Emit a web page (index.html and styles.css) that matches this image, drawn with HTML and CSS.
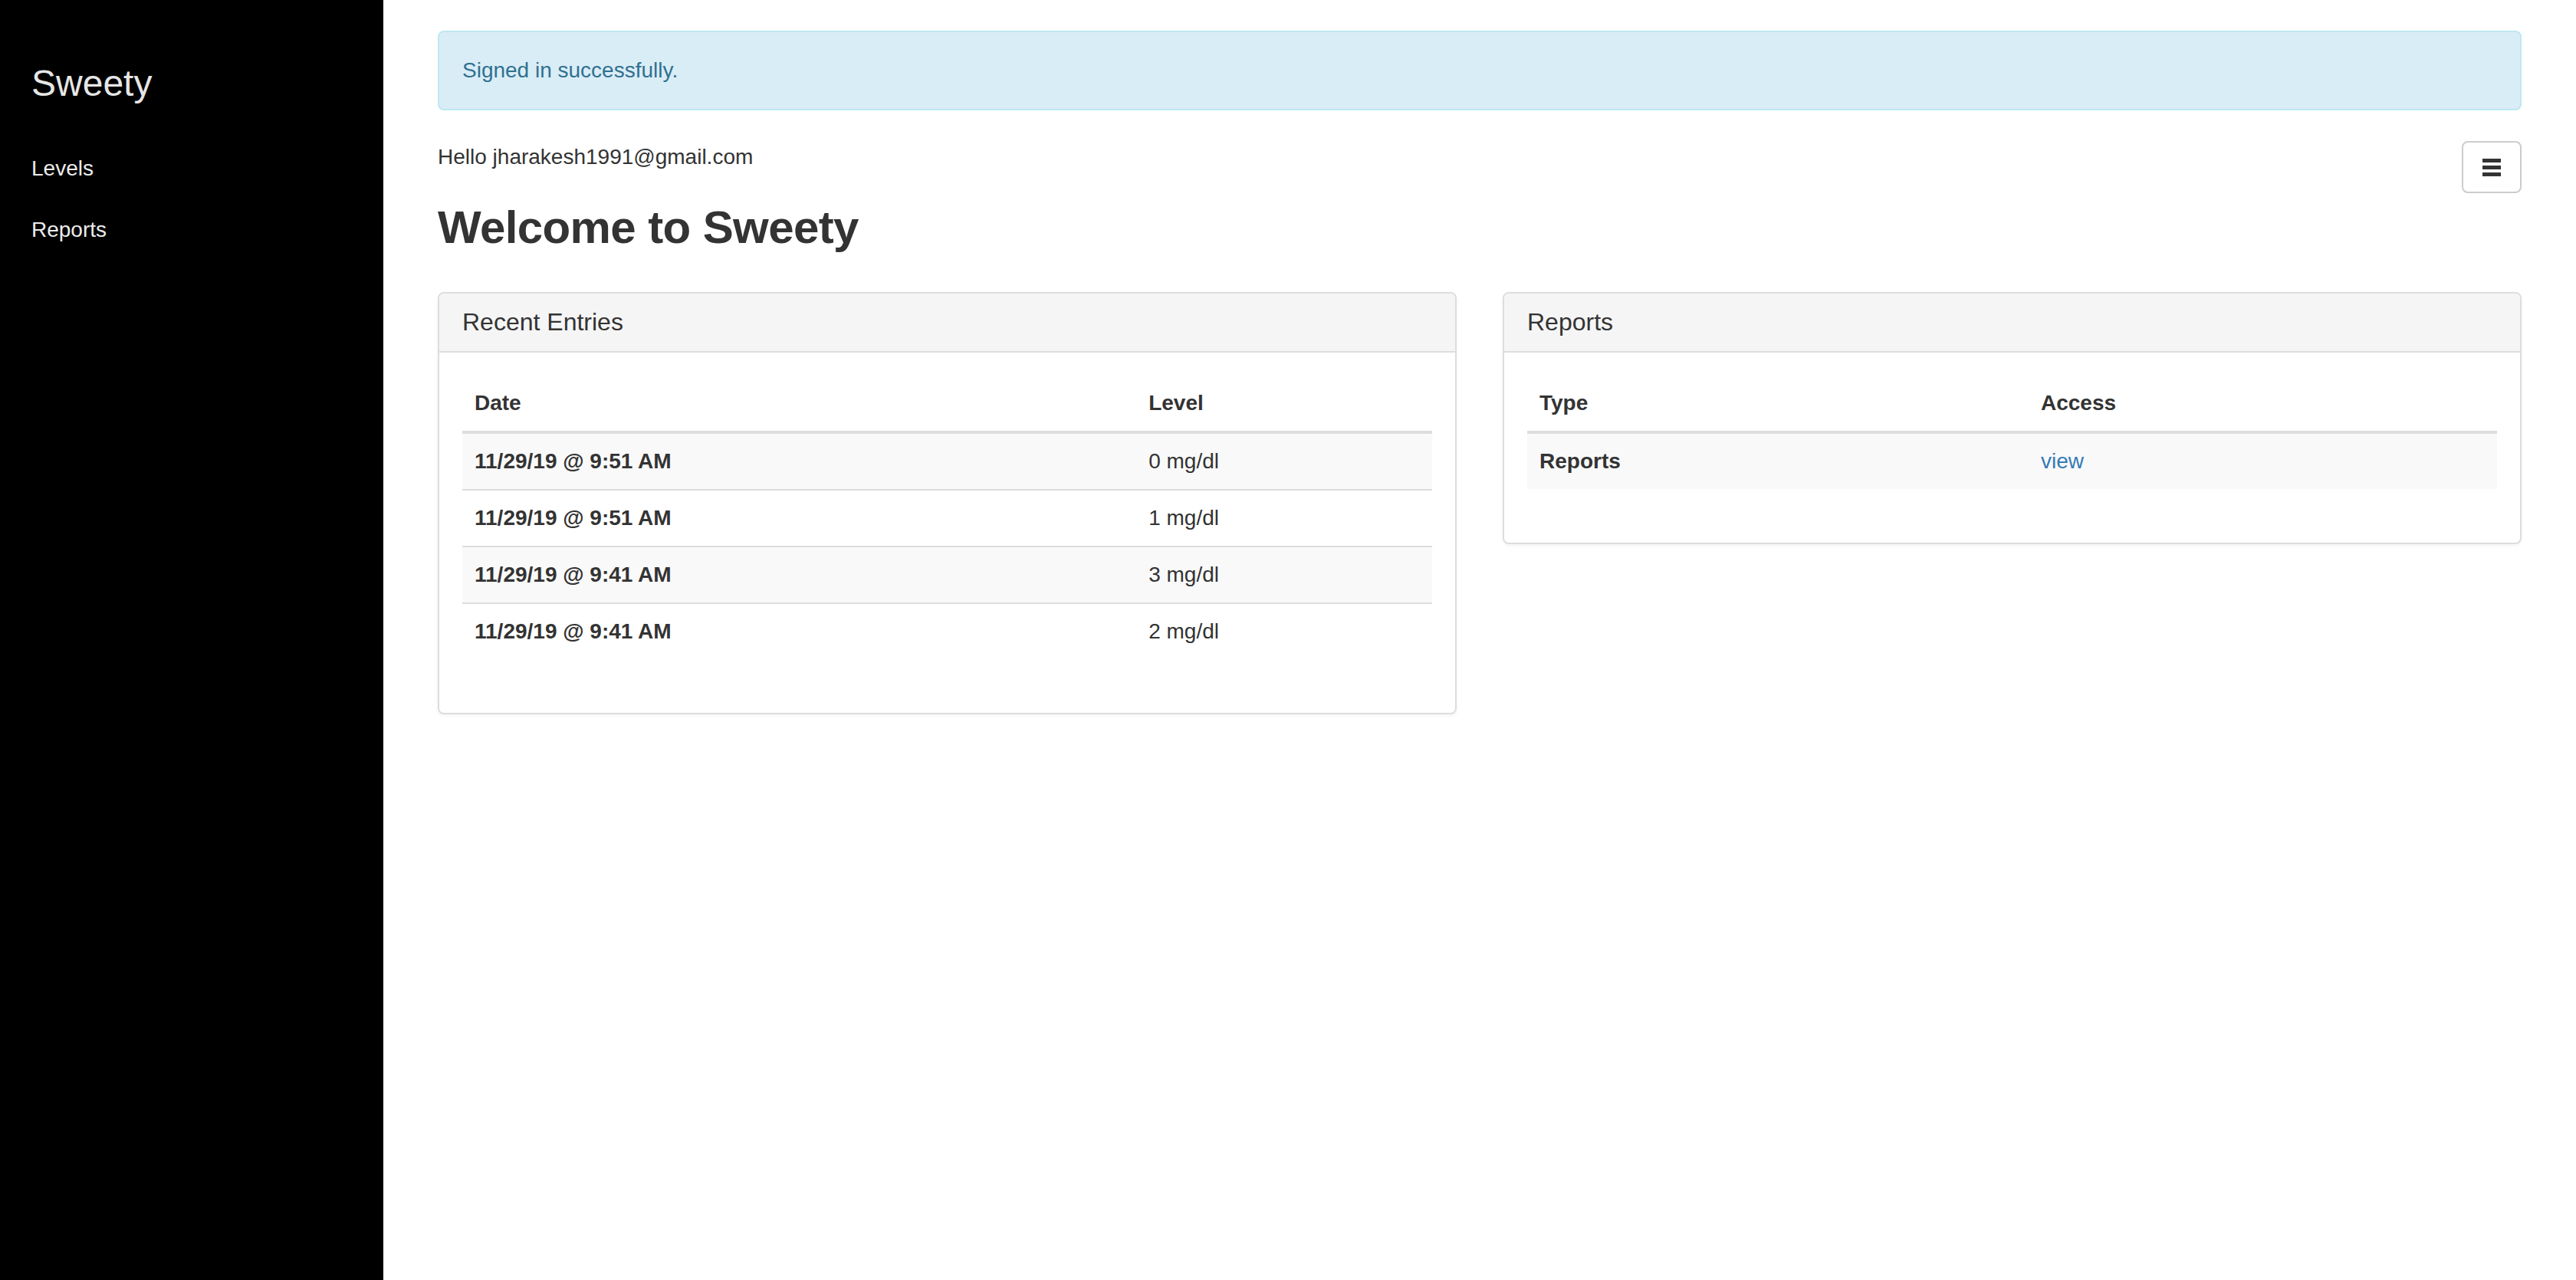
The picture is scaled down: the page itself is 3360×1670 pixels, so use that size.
FILE: index.html
```html
<!DOCTYPE html>
<html lang="en">
<head>
<meta charset="utf-8">
<title>Sweety</title>
<link rel="stylesheet" href="styles.css">
</head>
<body>
<div class="layout">
  <aside class="sidebar">
    <div class="brand">Sweety</div>
    <nav class="side-nav">
      <a href="#" class="side-link">Levels</a>
      <a href="#" class="side-link">Reports</a>
    </nav>
  </aside>
  <main class="main">
    <div class="alert">Signed in successfully.</div>
    <button class="menu-btn" type="button" aria-label="Menu">
      <span class="bar"></span><span class="bar"></span><span class="bar"></span>
    </button>
    <p class="hello">Hello jharakesh1991@gmail.com</p>
    <h2 class="title">Welcome to Sweety</h2>
    <div class="panels">
      <section class="panel">
        <div class="panel-heading"><h3 class="panel-title">Recent Entries</h3></div>
        <div class="panel-body">
          <table class="table">
            <thead>
              <tr><th class="col-date">Date</th><th>Level</th></tr>
            </thead>
            <tbody>
              <tr><th class="rowhead">11/29/19 @ 9:51 AM</th><td>0 mg/dl</td></tr>
              <tr><th class="rowhead">11/29/19 @ 9:51 AM</th><td>1 mg/dl</td></tr>
              <tr><th class="rowhead">11/29/19 @ 9:41 AM</th><td>3 mg/dl</td></tr>
              <tr><th class="rowhead">11/29/19 @ 9:41 AM</th><td>2 mg/dl</td></tr>
            </tbody>
          </table>
        </div>
      </section>
      <section class="panel">
        <div class="panel-heading"><h3 class="panel-title">Reports</h3></div>
        <div class="panel-body">
          <table class="table">
            <thead>
              <tr><th class="col-type">Type</th><th>Access</th></tr>
            </thead>
            <tbody>
              <tr><th class="rowhead">Reports</th><td><a href="#" class="link">view</a></td></tr>
            </tbody>
          </table>
        </div>
      </section>
    </div>
  </main>
</div>
</body>
</html>
```

FILE: styles.css
```css
* { box-sizing: border-box; }

html, body {
  margin: 0;
  padding: 0;
  background: #fff;
}

body {
  font-family: "Liberation Sans", Arial, Helvetica, sans-serif;
  font-size: 28px;
  line-height: 40px;
  color: #333;
}

.layout {
  display: flex;
  min-height: 100vh;
}

.sidebar {
  width: 500px;
  flex-shrink: 0;
  background: #000;
  padding: 0 41px;
}

.brand {
  margin-top: 82px;
  font-size: 48px;
  line-height: 53px;
  color: #e6e6e6;
}

.side-nav {
  display: flex;
  flex-direction: column;
  margin-top: 45px;
}

.side-link {
  display: block;
  padding: 20px 0;
  font-size: 28px;
  line-height: 40px;
  color: #ececec;
  text-decoration: none;
}

.main {
  flex: 1;
  padding: 40px 71px;
}

.alert {
  padding: 30px;
  margin-bottom: 40px;
  border: 2px solid #bce8f1;
  border-radius: 8px;
  background: #d9edf7;
  color: #31708f;
  line-height: 40px;
}

.menu-btn {
  float: right;
  width: 78px;
  height: 68px;
  padding: 0;
  border: 2px solid #ccc;
  border-radius: 8px;
  background: #fff;
  display: flex;
  flex-direction: column;
  align-items: center;
  justify-content: center;
  gap: 4px;
  cursor: pointer;
}

.bar {
  display: block;
  width: 24px;
  height: 5px;
  background: #333;
}

.hello {
  margin: 0 0 20px;
  padding-top: 1px;
}

.title {
  margin: 39px 0 51px;
  font-size: 60px;
  line-height: 66px;
  font-weight: bold;
  letter-spacing: -0.6px;
  color: #333;
}

.panels {
  display: grid;
  grid-template-columns: 1fr 1fr;
  gap: 60px;
  align-items: start;
}

.panel {
  background: #fff;
  border: 2px solid #ddd;
  border-radius: 8px;
  box-shadow: 0 2px 4px rgba(0, 0, 0, 0.05);
}

.panel-heading {
  padding: 20px 30px;
  background: #f5f5f5;
  border-bottom: 2px solid #ddd;
  border-radius: 6px 6px 0 0;
}

.panel-title {
  margin: 0;
  font-size: 32px;
  line-height: 1.1;
  font-weight: normal;
  color: #333;
}

.panel-body {
  padding: 30px;
}

.table {
  width: 100%;
  margin-bottom: 40px;
  border-collapse: collapse;
  border-spacing: 0;
  table-layout: fixed;
}

.table th,
.table td {
  padding: 16px;
  line-height: 40px;
  text-align: left;
  vertical-align: top;
}

.table thead th {
  font-weight: bold;
  vertical-align: bottom;
  border-bottom: 4px solid #ddd;
}

.table tbody th,
.table tbody td {
  border-top: 2px solid #ddd;
}

.table tbody tr:nth-child(odd) {
  background: #f9f9f9;
}

.rowhead {
  font-weight: bold;
}

.col-date { width: 69.5%; }
.col-type { width: 51.7%; }

.link {
  color: #337ab7;
  text-decoration: none;
}
```
